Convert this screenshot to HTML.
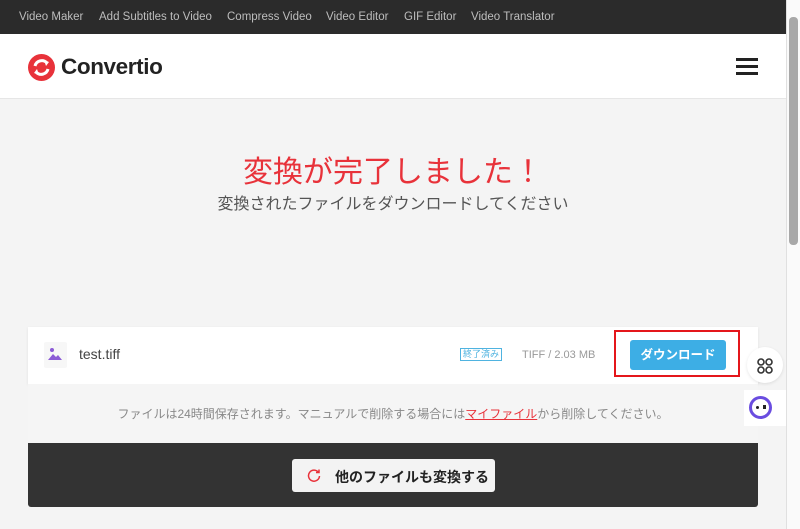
<!DOCTYPE html>
<html><head><meta charset="utf-8"><style>
*{margin:0;padding:0;box-sizing:border-box}
body{width:800px;height:529px;overflow:hidden;background:#f4f4f4;font-family:"Liberation Sans","Noto Sans CJK JP",sans-serif;position:relative}
.top{position:absolute;left:0;top:0;width:786px;height:34px;background:#2b2b2b;color:#bdbdbd;font-size:11.5px}
.top span{position:absolute;top:11px}
.hdr{position:absolute;left:0;top:34px;width:786px;height:65px;background:#fff;border-bottom:1px solid #e6e6e6}
.logo{position:absolute;left:61px;top:20px;font-size:22.5px;font-weight:bold;color:#222;letter-spacing:-0.4px}
.ham{position:absolute;left:736px;width:22px;height:3px;background:#222}
.h1{position:absolute;left:0;width:786px;text-align:center;top:147px;font-size:30px;color:#e8323a}
.h2{position:absolute;left:0;width:786px;text-align:center;top:190px;font-size:16px;color:#555}
.card{position:absolute;left:28px;top:327px;width:730px;height:57px;background:#fff;box-shadow:0 1px 3px rgba(0,0,0,.08)}
.note{position:absolute;left:28px;top:384px;width:730px;height:59px;background:#f5f5f5;text-align:center;font-size:12px;color:#888;padding-top:21px}
.dark{position:absolute;left:28px;top:443px;width:730px;height:64px;background:#333;border-radius:0 0 3px 3px}
.btn2{position:absolute;left:292px;top:459px;width:203px;height:33px;background:#f3f3f3;border-radius:3px;font-size:14px;font-weight:bold;color:#222}
.sb{position:absolute;left:786px;top:0;width:14px;height:529px;background:#fafafa;border-left:1px solid #e0e0e0}
</style></head><body>
<div class="top">
<span style="left:19px">Video Maker</span><span style="left:99px">Add Subtitles to Video</span><span style="left:227px">Compress Video</span><span style="left:326px">Video Editor</span><span style="left:404px">GIF Editor</span><span style="left:471px">Video Translator</span>
</div>
<div class="hdr">
<svg style="position:absolute;left:28px;top:20px" width="27" height="27" viewBox="0 0 27 27"><circle cx="13.5" cy="13.5" r="13.5" fill="#e8323a"/><path d="M7 12 A7 7 0 0 1 19 9" stroke="#fff" stroke-width="3" fill="none"/><path d="M20 15 A7 7 0 0 1 8 18" stroke="#fff" stroke-width="3" fill="none"/><path d="M16 6 L21 8 L18 12Z" fill="#fff"/><path d="M11 21 L6 19 L9 15Z" fill="#fff"/></svg>
<div class="logo">Convertio</div>
<div class="ham" style="top:24px"></div><div class="ham" style="top:31px"></div><div class="ham" style="top:38px"></div>
</div>
<div class="h1">変換が完了しました！</div>
<div class="h2">変換されたファイルをダウンロードしてください</div>
<div class="card">
<div style="position:absolute;left:16px;top:15px;width:23px;height:26px;background:#f7f7f7;border-radius:2px"></div>
<svg style="position:absolute;left:20px;top:20px" width="14" height="14" viewBox="0 0 14 14"><circle cx="4" cy="3" r="2" fill="#8c5cd6"/><path d="M0 13 L5 7 L8 10 L10 8 L14 13Z" fill="#8c5cd6"/></svg>
<div style="position:absolute;left:51px;top:19px;font-size:14px;color:#444">test.tiff</div>
<div style="position:absolute;left:432px;top:21px;border:1px solid #4fb3e0;color:#4fb3e0;font-size:9px;padding:0 2px;line-height:11px">終了済み</div>
<div style="position:absolute;left:494px;top:22px;font-size:11px;color:#999">TIFF / 2.03 MB</div>
<div style="position:absolute;left:586px;top:3px;width:126px;height:47px;border:2px solid #e4161b"></div>
<div style="position:absolute;left:602px;top:13px;width:96px;height:30px;background:#3daee5;border-radius:3px;color:#fff;font-size:12.5px;font-weight:bold;text-align:center;line-height:30px">ダウンロード</div>
</div>
<div class="note">ファイルは24時間保存されます。マニュアルで削除する場合には<span style="color:#e8323a;text-decoration:underline">マイファイル</span>から削除してください。</div>
<div class="dark"></div>
<div class="btn2"><svg style="position:absolute;left:15px;top:9px" width="14" height="14" viewBox="0 0 14 14"><path d="M11.5 4.5 A5.5 5.5 0 1 0 12.5 8" stroke="#e8323a" stroke-width="1.5" fill="none"/><path d="M9 4.5 L12 4.5 L12 1.5" stroke="#e8323a" stroke-width="1.5" fill="none"/></svg><span style="position:absolute;left:43px;top:8px">他のファイルも変換する</span></div>
<div style="position:absolute;left:747px;top:347px;width:36px;height:36px;border-radius:50%;background:#fff;box-shadow:0 1px 3px rgba(0,0,0,.1)"></div>
<svg style="position:absolute;left:757px;top:358px" width="16" height="16" viewBox="0 0 16 16" fill="none" stroke="#333" stroke-width="1.6"><circle cx="4" cy="4" r="3"/><circle cx="12" cy="4" r="3"/><circle cx="4" cy="12" r="3"/><circle cx="12" cy="12" r="3"/></svg>
<div style="position:absolute;left:744px;top:390px;width:42px;height:36px;background:#fff"></div>
<div style="position:absolute;left:749px;top:396px;width:23px;height:23px;border-radius:50%;border:3px solid #6a4de0;background:#fff"></div>
<div style="position:absolute;left:756px;top:406px;width:3px;height:3px;background:#222;border-radius:50%"></div><div style="position:absolute;left:763px;top:405px;width:3px;height:4px;background:#222"></div>
<div class="sb"><div style="position:absolute;left:2px;top:17px;width:9px;height:228px;background:#a8a8a8;border-radius:4px"></div></div>
</body></html>
